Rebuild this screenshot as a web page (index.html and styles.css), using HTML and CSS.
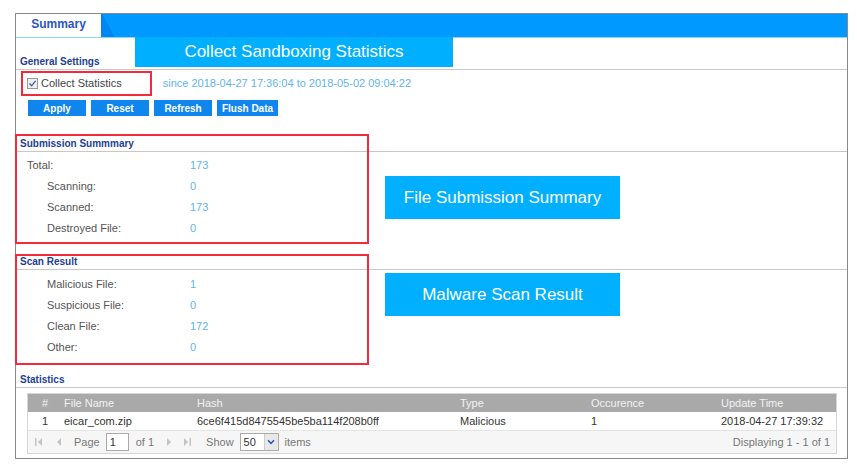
FILE: index.html
```html
<!DOCTYPE html>
<html>
<head>
  <title>Sandboxing Summary</title>
  <link rel="stylesheet" href="styles.css">
</head>
<body>
  <div class="panel">
    <div class="tabbar">
      <div class="tab">Summary</div>
      <div class="tab-edge"></div>
    </div>

    <div class="section-title">General Settings</div>
    <div class="collect-row">
      <span class="check">
        <svg width="9" height="9" viewBox="0 0 9 9"><path d="M1.5 4.5 L3.6 6.8 L7.6 1.8" fill="none" stroke="#3a5ea8" stroke-width="1.3"/></svg>
      </span>
      <span class="collect-label">Collect Statistics</span>
      <span class="since">since 2018-04-27 17:36:04 to 2018-05-02 09:04:22</span>
    </div>
    <div class="buttons">
      <button class="btn">Apply</button>
      <button class="btn">Reset</button>
      <button class="btn">Refresh</button>
      <button class="btn">Flush Data</button>
    </div>

    <div class="section-title gap">Submission Summmary</div>
    <div class="rows first">
      <div class="row"><span class="label">Total:</span><span class="value">173</span></div>
      <div class="row sub"><span class="label">Scanning:</span><span class="value">0</span></div>
      <div class="row sub"><span class="label">Scanned:</span><span class="value">173</span></div>
      <div class="row sub"><span class="label">Destroyed File:</span><span class="value">0</span></div>
    </div>

    <div class="section-title">Scan Result</div>
    <div class="rows">
      <div class="row sub"><span class="label">Malicious File:</span><span class="value">1</span></div>
      <div class="row sub"><span class="label">Suspicious File:</span><span class="value">0</span></div>
      <div class="row sub"><span class="label">Clean File:</span><span class="value">172</span></div>
      <div class="row sub"><span class="label">Other:</span><span class="value">0</span></div>
    </div>

    <div class="section-title gap-small">Statistics</div>
    <div class="grid">
      <table>
        <colgroup>
          <col class="c-num"><col class="c-name"><col class="c-hash"><col class="c-type"><col class="c-occ"><col class="c-time">
        </colgroup>
        <thead>
          <tr><th>#</th><th>File Name</th><th>Hash</th><th>Type</th><th>Occurence</th><th>Update Time</th></tr>
        </thead>
        <tbody>
          <tr><td>1</td><td>eicar_com.zip</td><td>6ce6f415d8475545be5ba114f208b0ff</td><td>Malicious</td><td>1</td><td>2018-04-27 17:39:32</td></tr>
        </tbody>
      </table>
      <div class="pager">
        <svg class="pg-icon" width="10" height="10" viewBox="0 0 10 10"><rect x="1" y="1" width="1.5" height="8" fill="#c4c4c4"/><path d="M8 1 L4 5 L8 9 Z" fill="#c4c4c4"/></svg>
        <svg class="pg-icon" width="10" height="10" viewBox="0 0 10 10"><path d="M7 1 L3 5 L7 9 Z" fill="#c4c4c4"/></svg>
        <span class="pg-text">Page</span>
        <span class="pg-input">1</span>
        <span class="pg-text">of 1</span>
        <svg class="pg-icon next" width="10" height="10" viewBox="0 0 10 10"><path d="M3 1 L7 5 L3 9 Z" fill="#c4c4c4"/></svg>
        <svg class="pg-icon" width="10" height="10" viewBox="0 0 10 10"><path d="M2 1 L6 5 L2 9 Z" fill="#c4c4c4"/><rect x="7.5" y="1" width="1.5" height="8" fill="#c4c4c4"/></svg>
        <span class="pg-text show">Show</span>
        <span class="pg-select">
          <span class="pg-select-val">50</span>
          <span class="pg-select-btn">
            <svg width="8" height="6" viewBox="0 0 8 6"><path d="M1 1.2 L4 4.3 L7 1.2" fill="none" stroke="#2a5cb8" stroke-width="1.6"/></svg>
          </span>
        </span>
        <span class="pg-text">items</span>
        <span class="pg-info">Displaying 1 - 1 of 1</span>
      </div>
    </div>
  </div>

  <!-- annotation overlays -->
  <div class="callout callout-general">Collect Sandboxing Statistics</div>
  <div class="callout callout-submission">File Submission Summary</div>
  <div class="callout callout-scan">Malware Scan Result</div>
  <div class="mark mark-collect"></div>
  <div class="mark mark-submission"></div>
  <div class="mark mark-scan"></div>
</body>
</html>
```

FILE: styles.css
```css
body {
  margin: 0;
  background: #fff;
  font-family: "Liberation Sans", Arial, sans-serif;
  font-size: 11px;
  color: #555;
  position: relative;
  width: 857px;
  height: 468px;
}

.panel {
  margin: 13px 0 0 15px;
  width: 831px;
  height: 444px;
  border: 1px solid #8a8a8a;
}

/* tab strip */
.tabbar {
  height: 23px;
  background: #0099ff;
  border-bottom: 1px solid #8fd4ff;
  display: flex;
}

.tab {
  width: 85px;
  background: #fff;
  color: #2a55c8;
  font-weight: bold;
  font-size: 12px;
  line-height: 20px;
  text-align: center;
}

.tab-edge {
  width: 15px;
  background: linear-gradient(63deg, #0086f0 50%, #0099ff 50%);
}

/* section headers */
.section-title {
  margin-top: 17px;
  padding: 0 4px;
  line-height: 14px;
  border-bottom: 1px solid #c8c8c8;
  color: #1d3f94;
  font-weight: bold;
  font-size: 10px;
}

.section-title.gap {
  margin-top: 21px;
}

.section-title.gap-small {
  margin-top: 16px;
}

/* collect statistics */
.collect-row {
  height: 26px;
  display: flex;
  align-items: center;
  padding-left: 11px;
}

.check {
  width: 9px;
  height: 9px;
  border: 1px solid #999;
  background: #eee;
  display: flex;
}

.collect-label {
  margin-left: 3px;
  color: #444;
}

.since {
  margin-left: 41px;
  color: #5fb4f0;
}

.buttons {
  margin-top: 4px;
  padding-left: 12px;
  display: flex;
  gap: 5px;
}

.btn {
  width: 58px;
  height: 16px;
  padding: 0;
  border: none;
  background: #0f86ee;
  color: #fff;
  font-family: "Liberation Sans", Arial, sans-serif;
  font-size: 10px;
  font-weight: bold;
}

.btn:last-child {
  width: 61px;
}

/* summary rows */
.rows {
  padding-top: 3px;
}

.rows.first {
  padding-top: 2px;
}

.row {
  height: 21px;
  display: flex;
  align-items: center;
  padding-left: 11px;
}

.row.sub {
  padding-left: 31px;
}

.label {
  width: 163px;
}

.row.sub .label {
  width: 143px;
}

.value {
  color: #5fb4f0;
}

/* statistics grid */
.grid {
  margin: 5px 0 0 11px;
  width: 808px;
  border: 1px solid #d6d6d6;
}

table {
  width: 100%;
  border-collapse: collapse;
  table-layout: fixed;
}

.c-num { width: 36px; }
.c-name { width: 133px; }
.c-hash { width: 263px; }
.c-type { width: 131px; }
.c-occ { width: 130px; }

th {
  height: 18px;
  padding: 0;
  background: #a9a9a9;
  color: #f2f2f2;
  font-weight: normal;
  text-align: left;
}

td {
  height: 18px;
  padding: 0;
  color: #333;
}

th:first-child,
td:first-child {
  padding-left: 14px;
}

.pager {
  height: 22px;
  background: #f6f6f6;
  border-top: 1px solid #e4e4e4;
  display: flex;
  align-items: center;
  padding-left: 6px;
  padding-right: 6px;
}

.pg-icon {
  margin-right: 10px;
}

.pg-icon.next {
  margin-left: 4px;
  margin-right: 8px;
}

.pg-text {
  margin-right: 6px;
  color: #777;
}

.pg-text.show {
  margin-left: 4px;
}

.pg-input {
  width: 18px;
  height: 16px;
  border: 1px solid #aaa;
  background: #fff;
  padding-left: 3px;
  line-height: 16px;
  color: #333;
  margin: 0 7px 0 0;
}

.pg-select {
  width: 37px;
  height: 16px;
  border: 1px solid #aaa;
  background: #fff;
  display: flex;
  margin-right: 6px;
}

.pg-select-val {
  flex: 1;
  padding-left: 3px;
  line-height: 16px;
  color: #333;
}

.pg-select-btn {
  width: 13px;
  background: #e8e8e8;
  border-left: 1px solid #ccc;
  display: flex;
  align-items: center;
  justify-content: center;
}

.pg-info {
  margin-left: auto;
  color: #777;
}

/* annotation overlays */
.callout {
  position: absolute;
  background: #00b0ff;
  color: #fff;
  font-size: 17px;
  display: flex;
  align-items: center;
  justify-content: center;
}

.callout-general {
  left: 135px;
  top: 37px;
  width: 318px;
  height: 30px;
}

.callout-submission {
  left: 385px;
  top: 176px;
  width: 235px;
  height: 43px;
}

.callout-scan {
  left: 385px;
  top: 273px;
  width: 235px;
  height: 43px;
}

.mark {
  position: absolute;
  border: 2px solid #f22a3a;
}

.mark-collect {
  left: 21px;
  top: 71px;
  width: 127px;
  height: 21px;
}

.mark-submission {
  left: 15px;
  top: 134px;
  width: 350px;
  height: 106px;
}

.mark-scan {
  left: 15px;
  top: 254px;
  width: 350px;
  height: 107px;
}
```
